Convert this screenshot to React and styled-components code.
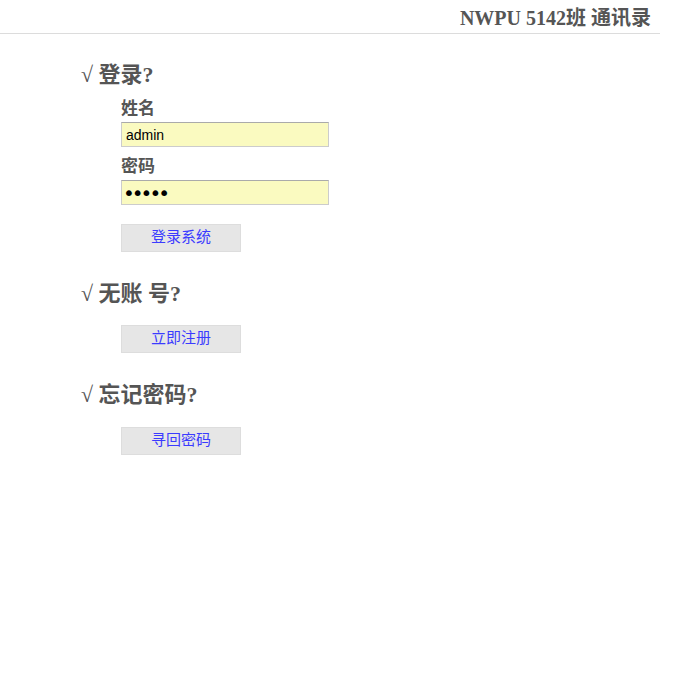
import React from 'react'
import styled, { createGlobalStyle } from 'styled-components'

const Global = createGlobalStyle`
  html, body {
    margin: 0;
    padding: 0;
    background: #fff;
  }
`

const SERIF = `"Liberation Serif", "Noto Sans CJK SC", serif`
const SANS = `"Liberation Sans", "Noto Sans CJK SC", sans-serif`

const Page = styled.div`
  width: 689px;
  min-height: 694px;
`
const Header = styled.header`
  width: 660px;
  height: 34px;
  box-sizing: border-box;
  border-bottom: 1px solid #dcdcdc;
  display: flex;
  justify-content: flex-end;
  align-items: center;
  padding-right: 9px;
  font-family: ${SERIF};
  font-weight: bold;
  font-size: 20px;
  color: #555;
`
const Main = styled.main`
  padding: 29px 0 0 81px;
  display: flex;
  flex-direction: column;
`
const Section = styled.section`
  display: flex;
  flex-direction: column;
  margin-bottom: 30px;
`
const Heading = styled.h2`
  margin: 0;
  height: 24px;
  line-height: 24px;
  font-family: ${SERIF};
  font-weight: bold;
  font-size: 22px;
  color: #555;
`
const Body = styled.div`
  padding-left: 40px;
  display: flex;
  flex-direction: column;
  align-items: flex-start;
`
const Label = styled.label`
  height: 18px;
  line-height: 18px;
  margin-top: ${p => p.$first ? '13px' : '11px'};
  margin-bottom: 4px;
  font-family: ${SERIF};
  font-weight: bold;
  font-size: 17px;
  color: #555;
`
const Input = styled.input`
  width: 208px;
  height: 25px;
  box-sizing: border-box;
  margin: 0;
  padding: 0 4px;
  background: #fafac0;
  border: 1px solid #ccc;
  border-top-color: #aaa;
  font-family: ${SANS};
  font-size: 14px;
  color: #000;
  outline: none;
  caret-color: #000;

  &[type="password"] {
    font-family: "DejaVu Sans", sans-serif;
    font-size: 20px;
    letter-spacing: -3px;
    padding-left: 1px;
  }
`
const Button = styled.button`
  width: 120px;
  height: 28px;
  box-sizing: border-box;
  margin-top: ${p => p.$gap}px;
  padding: 0 0 3px;
  line-height: 1;
  background: #e6e6e6;
  border: 1px solid #ddd;
  font-family: ${SANS};
  font-size: 15px;
  color: #3b3bff;
  cursor: pointer;
`

export default function App() {
  return (
    <Page>
      <Global />
      <Header>NWPU 5142班 通讯录</Header>
      <Main>
        <Section>
          <Heading>√ 登录?</Heading>
          <Body>
            <Label $first>姓名</Label>
            <Input type="text" defaultValue="admin" />
            <Label>密码</Label>
            <Input type="password" defaultValue="admin" autoFocus />
            <Button $gap={19}>登录系统</Button>
          </Body>
        </Section>
        <Section>
          <Heading>√ 无账 号?</Heading>
          <Body>
            <Button $gap={19}>立即注册</Button>
          </Body>
        </Section>
        <Section>
          <Heading>√ 忘记密码?</Heading>
          <Body>
            <Button $gap={20}>寻回密码</Button>
          </Body>
        </Section>
      </Main>
    </Page>
  )
}
